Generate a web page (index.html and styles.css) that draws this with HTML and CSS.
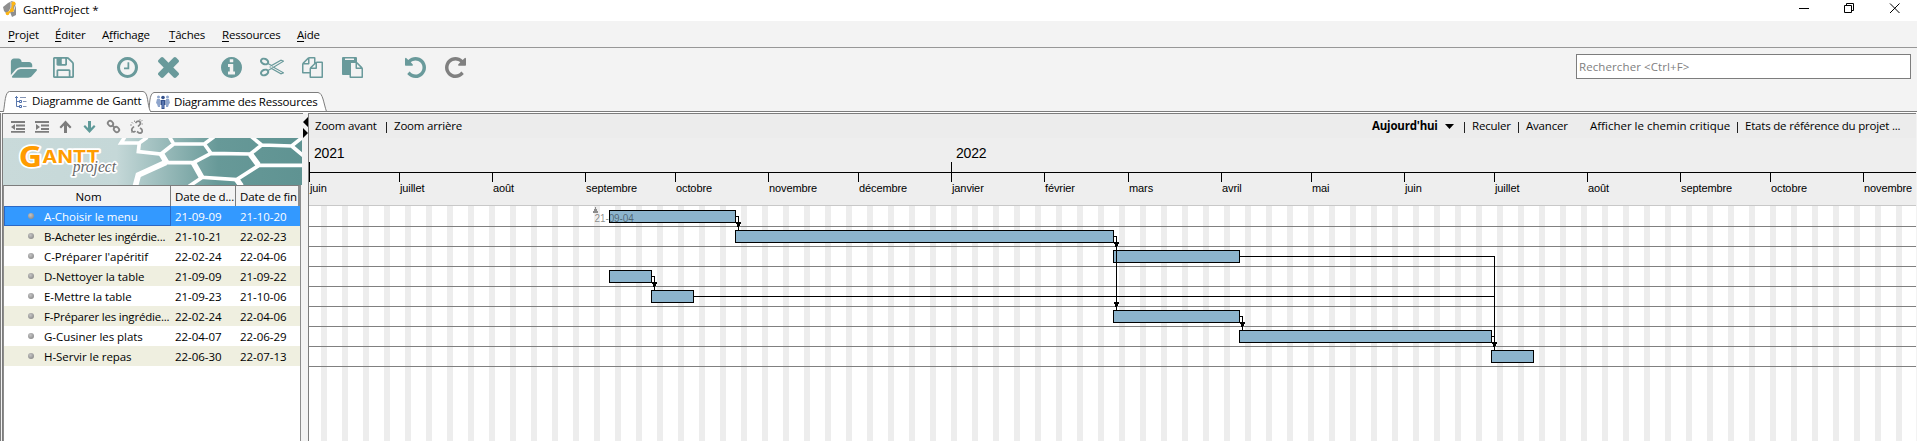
FILE: index.html
```html
<!DOCTYPE html>
<html lang="fr">
<head>
<meta charset="utf-8">
<title>GanttProject *</title>
<link rel="stylesheet" href="styles.css">
</head>
<body>
<header class="titlebar">
  <svg class="app-icon" width="14" height="16" viewBox="0 0 14 16"><path d="M0 6 5 2 9 0 13 3V14L9 16 7 11 4 13 1 10Z" fill="#8f8f8f"/><path d="M8 1v6l-3 5M13 3l-3 8" stroke="#fff" stroke-width=".8" fill="none"/><path d="M10 3 9 9 5 12" stroke="#fdb515" stroke-width="2" fill="none"/><circle cx="10.500" cy="2.500" r="2" fill="#fdb515"/><circle cx="9" cy="9" r="2" fill="#fdb515"/><circle cx="4.500" cy="12.500" r="1.800" fill="#fdb515"/></svg>
  <span class="app-name">GanttProject *</span>
  <svg class="window-buttons" width="110" height="21" viewBox="0 0 110 21" fill="none" stroke="#000"><path d="M4 8.500h10M49.500 5.500h7v7h-7zM51.500 5V3.500h7v7H57"/><path d="m95 3.500 9.500 9.500M104.500 3.500 95 13"/></svg>
</header>
<nav class="menubar">
  <span class="m1"><u>P</u>rojet</span><span class="m2"><u>É</u>diter</span><span class="m3">A<u>f</u>fichage</span><span class="m4"><u>T</u>âches</span><span class="m5"><u>R</u>essources</span><span><u>A</u>ide</span>
</nav>
<div class="toolbar">
  <svg class="t-open" viewBox="0 128 1943 1536" preserveAspectRatio="none"><path d="M1943 952q0 31-31 66l-336 396q-43 51-120.500 86.500t-143.500 35.500h-1088q-34 0-60.500-13t-26.500-43q0-31 31-66l336-396q43-51 120.500-86.500t143.500-35.500h1088q34 0 60.500 13t26.500 43zm-343-344v160h-832q-94 0-197 47.500t-164 119.500l-337 396-5 6q0-4-.5-12.500t-.5-12.500v-960q0-92 66-158t158-66h320q92 0 158 66t66 158v32h544q92 0 158 66t66 158z" transform="translate(0 110)"/></svg>
  <svg class="t-save" viewBox="128 128 1536 1536"><path d="M512 1536h768v-384h-768v384zm896 0h128v-896q0-14-10-38.500t-20-34.500l-281-281q-10-10-34-20t-39-10v416q0 40-28 68t-68 28h-576q-40 0-68-28t-28-68v-416h-128v1280h128v-416q0-40 28-68t68-28h832q40 0 68 28t28 68v416zm-384-928v-320q0-13-9.500-22.500t-22.500-9.500h-192q-13 0-22.500 9.500t-9.500 22.500v320q0 13 9.500 22.500t22.500 9.500h192q13 0 22.500-9.500t9.500-22.500zm640 32v928q0 40-28 68t-68 28h-1344q-40 0-68-28t-28-68v-1344q0-40 28-68t68-28h928q40 0 88 20t76 48l280 280q28 28 48 76t20 88z"/></svg>
  <svg class="t-clock" viewBox="128 128 1536 1536"><path d="M1024 544v448q0 14-9 23t-23 9h-320q-14 0-23-9t-9-23v-64q0-14 9-23t23-9h224v-352q0-14 9-23t23-9h64q14 0 23 9t9 23zm416 352q0-148-73-273t-198-198-273-73-273 73-198 198-73 273 73 273 198 198 273 73 273-73 198-198 73-273zm224 0q0 209-103 385.500t-279.500 279.500-385.500 103-385.500-103-279.500-279.500-103-385.500 103-385.500 279.500-279.500 385.500-103 385.500 103 279.500 279.500 103 385.500z"/></svg>
  <svg class="t-delete" viewBox="302 366 1188 1188"><path d="M1490 1322q0 40-28 68l-136 136q-28 28-68 28t-68-28l-294-294-294 294q-28 28-68 28t-68-28l-136-136q-28-28-28-68t28-68l294-294-294-294q-28-28-28-68t28-68l136-136q28-28 68-28t68 28l294 294 294-294q28-28 68-28t68 28l136 136q28 28 28 68t-28 68l-294 294 294 294q28 28 28 68z"/></svg>
  <svg class="t-info" viewBox="128 128 1536 1536"><path d="M1152 1376v-160q0-14-9-23t-23-9h-96v-512q0-14-9-23t-23-9h-320q-14 0-23 9t-9 23v160q0 14 9 23t23 9h96v320h-96q-14 0-23 9t-9 23v160q0 14 9 23t23 9h448q14 0 23-9t9-23zm-128-896v-160q0-14-9-23t-23-9h-192q-14 0-23 9t-9 23v160q0 14 9 23t23 9h192q14 0 23-9t9-23zm640 416q0 209-103 385.500t-279.500 279.500-385.500 103-385.500-103-279.500-279.500-103-385.500 103-385.500 279.500-279.500 385.500-103 385.500 103 279.500 279.500 103 385.500z"/></svg>
  <svg class="t-cut" viewBox="0 0 24 20"><g fill="none" stroke="#699a9b"><ellipse cx="4.600" cy="4.500" rx="3.700" ry="2.700" transform="rotate(22 4.600 4.500)" stroke-width="2"/><ellipse cx="4.600" cy="15.500" rx="3.700" ry="2.700" transform="rotate(-22 4.600 15.500)" stroke-width="2"/><path d="M8 6.500 11.500 8.500 21 3.200 23.500 4.200 13.500 10.200 23.500 15.800 21 16.800 11.500 11.500 8 13.500M9.500 10h1.500" stroke-width="1.100"/><circle cx="12.600" cy="10.200" r=".6" stroke-width=".7"/></g></svg>
  <svg class="t-copy" viewBox="0 0 1792 1792"><path d="M1696 384q40 0 68 28t28 68v1216q0 40-28 68t-68 28h-960q-40 0-68-28t-28-68v-288h-544q-40 0-68-28t-28-68v-672q0-40 20-88t48-76l408-408q28-28 76-48t88-20h416q40 0 68 28t28 68v328q68-40 128-40h416zm-544 213l-299 299h299v-299zm-640-384l-299 299h299v-299zm196 647l316-316v-416h-384v416q0 40-28 68t-68 28h-416v640h512v-256q0-40 20-88t48-76zm956 804v-1152h-384v416q0 40-28 68t-68 28h-416v640h896z"/></svg>
  <svg class="t-paste" viewBox="0 0 1792 1792"><path d="M768 1664h896v-640h-416q-40 0-68-28t-28-68v-416h-384v1152zm256-1440v-64q0-13-9.500-22.500t-22.500-9.500h-704q-13 0-22.500 9.500t-9.500 22.500v64q0 13 9.500 22.500t22.500 9.500h704q13 0 22.500-9.500t9.500-22.500zm256 672h299l-299-299v299zm512 128v672q0 40-28 68t-68 28h-960q-40 0-68-28t-28-68v-160h-544q-40 0-68-28t-28-68v-1344q0-40 28-68t68-28h1088q40 0 68 28t28 68v328q21 13 36 28l408 408q28 28 48 76t20 88z"/></svg>
  <svg class="t-undo" viewBox="128 128 1536 1536"><path id="undo" d="M1664 896q0 156-61 298t-164 245-245 164-298 61q-172 0-327-72.500t-264-204.500q-7-10-6.500-22.500t8.500-20.500l137-138q10-9 25-9 16 2 23 12 73 95 179 147t225 52q104 0 198.500-40.500t163.500-109.500 109.500-163.500 40.500-198.500-40.500-198.500-109.500-163.500-163.500-109.500-198.500-40.500q-98 0-188 35.500t-160 101.500l137 138q31 30 14 69-17 40-59 40h-448q-26 0-45-19t-19-45v-448q0-42 40-59 39-17 69 14l130 129q107-101 244.500-156.500t284.500-55.500q156 0 298 61t245 164 164 245 61 298z"/></svg>
  <svg class="t-redo" viewBox="128 128 1536 1536"><use href="#undo" transform="translate(1792 0) scale(-1 1)"/></svg>
  <div class="search">Rechercher &lt;Ctrl+F&gt;</div>
</div>
<div class="tabs">
  <svg class="tab-shapes" width="340" height="23" viewBox="0 0 340 23"><path d="M148.500 20.500C150 14 149 2.500 154 1.500H318C323 2 323.500 12 326.500 20.500" fill="#fff" stroke="#7d7d7d"/><path d="M3.500 22C4 14 5 1 9.500.5H143C148.500 1 147.500 14 150.500 21.500V22H3Z" fill="#fff"/><path d="M0 20.500H3.500C5 12 5 1 9.500.5H143C148.500 1 147 14 150.500 20.500H340" fill="none" stroke="#7d7d7d"/></svg>
  <svg class="tab-icon i1" width="12" height="12" viewBox="0 0 12 12" fill="none"><path d="M1.500 0v10.500H4M1.500 5.500H4M0 1.500h3" stroke="#5a78ad"/><path d="M4.500 4.500h2v2h-2zM4.500 9.500h2v2h-2z" stroke="#4a6cab"/><path d="M5 1.500h6M8 5.500h3.500M8 10.500h3.500" stroke="#8494b4"/></svg>
  <span class="tab-a">Diagramme de Gantt</span>
  <svg class="tab-icon i2" width="14" height="14" viewBox="0 0 14 14"><g fill="#8ea5cc"><circle cx="2.500" cy="2" r="1.500"/><circle cx="11.500" cy="2" r="1.500"/><path d="M1 4h3v8H2L1 9 0 8ZM13 4h-3v8h2l1-3 1-1Z"/></g><g fill="#34518c"><circle cx="7" cy="2.500" r="1.800"/><path d="M4.500 5h5v5h-1v4h-3v-4h-1Z"/></g><path d="M7 6v7" stroke="#7a98cf"/></svg>
  <span class="tab-b">Diagramme des Ressources</span>
</div>
<main class="workspace">
  <section class="tasks">
    <div class="mini">
      <svg width="140" height="24" viewBox="0 0 140 24"><g fill="#7d7d7d"><path d="M8 7h14v2H8zM13 10.500h9v2h-9zM13 14h9v2h-9zM8 17h14v1.800H8zM12 10v6L8 13zM32 7h14v2H32zM38 10.500h8v2h-8zM38 14h8v2h-8zM32 17h14v1.800H32zM33 10v6l4-3z"/><path d="m62.500 6.500 6 6.500-1.500 1.500-3-3V19h-3v-7.500l-3 3-1.500-1.500z"/></g><path d="m86.500 19 6-6.500L91 11l-3 3V7h-3v7l-3-3-1.500 1.500z" fill="#5f9a99"/><g fill="none" stroke="#858585" stroke-width="1.800"><rect x="-2.800" y="-2.300" width="5.600" height="4.600" rx="2.200" transform="translate(107.500 9.500) rotate(45)"/><rect x="-2.800" y="-2.300" width="5.600" height="4.600" rx="2.200" transform="translate(113.500 15.500) rotate(45)"/><path d="m109 11 3 3"/></g><g fill="none" stroke="#858585"><path d="m132.500 9 1.500-1.500q2-1 3 .5 1 1.500-.5 3L135 12.500M134 17.500l2 1.500q2 .5 3-1 .5-1.500-.5-3L137 14M131 12.500l-1.500 1.500q-1.500 2 0 3.500 1.500 1 3-.5" stroke-width="1.700"/><path d="m139.500 6-1.500 1.500M140 10h-1.500M137 5v1.500M127 11h2M128.500 8l1.500 1.500M131.500 6.500v1.500M128 18.500l1.500-1" stroke-width=".8"/></g></svg>
    </div>
    <svg class="banner" width="299" height="47" viewBox="9 84 897 141" preserveAspectRatio="none">
      <defs><linearGradient id="teal"><stop offset="0" stop-color="#c9dada"/><stop offset=".38" stop-color="#c5d8d8"/><stop offset=".72" stop-color="#679998"/><stop offset="1" stop-color="#5f9392"/></linearGradient></defs>
      <path d="M9 84h897v141H9z" fill="url(#teal)"/>
      <g transform="translate(330 60)" fill="none" stroke="#fff" stroke-width="11"><path d="m45 20-12 19H88L112 22M88 38l-3 27 68 7 38-30L178 20M191 42h92L312 20M283 42l20 28-53 28h-82L153 70M303 70l118 2 34-27L424 20M455 45l90 3L580 20M545 48l35 29M421 72l26 34H580M447 106l-67 43-105-7-25-44M275 143l-38 26M380 148l14 22"/><path d="m168 97-83 38-9 34" stroke-width="17"/><path d="m153 70 17 28M250 98l25 44M421 72l24 33M380 148l14 20" stroke-width="17"/></g>
      <g class="logo"><text x="56" y="170" class="logo-g" textLength="70" lengthAdjust="spacingAndGlyphs">G</text><text x="127" y="158" class="logo-rest" textLength="172" lengthAdjust="spacingAndGlyphs">ANTT</text><text x="218" y="187" class="logo-project" textLength="130" lengthAdjust="spacingAndGlyphs">project</text></g>
    </svg>
    <div class="table">
      <div class="row head"><span>Nom</span><span>Date de d...</span><span>Date de fin</span></div>
      <div class="row sel"><span><i></i>A-Choisir le menu</span><span>21-09-09</span><span>21-10-20</span></div>
      <div class="row alt"><span><i></i>B-Acheter les ingérdie...</span><span>21-10-21</span><span>22-02-23</span></div>
      <div class="row"><span><i></i>C-Préparer l'apéritif</span><span>22-02-24</span><span>22-04-06</span></div>
      <div class="row alt"><span><i></i>D-Nettoyer la table</span><span>21-09-09</span><span>21-09-22</span></div>
      <div class="row"><span><i></i>E-Mettre la table</span><span>21-09-23</span><span>21-10-06</span></div>
      <div class="row alt"><span><i></i>F-Préparer les ingrédie...</span><span>22-02-24</span><span>22-04-06</span></div>
      <div class="row"><span><i></i>G-Cusiner les plats</span><span>22-04-07</span><span>22-06-29</span></div>
      <div class="row alt"><span><i></i>H-Servir le repas</span><span>22-06-30</span><span>22-07-13</span></div>
    </div>
  </section>
  <div class="splitter"><svg width="6" height="26" viewBox="0 0 6 26"><path d="M6 3v10L1 8zM1 14v10l5-5z"/></svg></div>
  <section class="chart">
    <div class="chart-actions">
      <span class="c1">Zoom avant</span><b class="sep s1"></b><span class="c2">Zoom arrière</span>
      <strong class="c3">Aujourd'hui</strong><svg class="drop" width="9" height="5" viewBox="0 0 9 5"><path d="M0 0h9L4.500 5z"/></svg><b class="sep s2"></b><span class="c4">Reculer</span><b class="sep s3"></b><span class="c5">Avancer</span><span class="c6">Afficher le chemin critique</span><b class="sep s4"></b><span class="c7">Etats de référence du projet ...</span>
    </div>
    <div class="years"><span style="width:642px">2021</span><span>2022</span></div>
    <div class="months"><span style="width:90px">juin</span><span style="width:93px">juillet</span><span style="width:93px">août</span><span style="width:90px">septembre</span><span style="width:93px">octobre</span><span style="width:90px">novembre</span><span style="width:93px">décembre</span><span style="width:93px">janvier</span><span style="width:84px">février</span><span style="width:93px">mars</span><span style="width:90px">avril</span><span style="width:93px">mai</span><span style="width:90px">juin</span><span style="width:93px">juillet</span><span style="width:93px">août</span><span style="width:90px">septembre</span><span style="width:93px">octobre</span><span style="width:53px">novembre</span></div>
    <svg class="plot" width="1607" height="235" viewBox="309 206 1607 235" shape-rendering="crispEdges">
      <defs>
        <pattern id="weekends" x="321" y="206" width="21" height="20" patternUnits="userSpaceOnUse"><path d="M0 0h6v20H0z" fill="#ededed"/></pattern>
        <path id="tip" d="M-2 0h5v2H2v2H1v2H0V5h-1V2h-1z"/>
      </defs>
      <path d="M309 206h1607v235H309z" fill="url(#weekends)"/>
      <path d="M309 226.500h1607M309 246.500h1607M309 266.500h1607M309 286.500h1607M309 306.500h1607M309 326.500h1607M309 346.500h1607M309 366.500h1607" stroke="#808080"/>
      <g fill="#8cb4cd" stroke="#000">
        <path d="M609.500 210.500h126v12h-126z"/>
        <path d="M735.500 230.500h378v12h-378z"/>
        <path d="M1113.500 250.500h126v12h-126z"/>
        <path d="M609.500 270.500h42v12h-42z"/>
        <path d="M651.500 290.500h42v12h-42z"/>
        <path d="M1113.500 310.500h126v12h-126z"/>
        <path d="M1239.500 330.500h252v12h-252z"/>
        <path d="M1491.500 350.500h42v12h-42z"/>
      </g>
      <path d="M736 216.500h2.500V230M1114 236.500h2.500V310M652 276.500h2.500V290M694 296.500h800M1240 256.500h254.500V350M1240 316.500h2.500V330M1492 336.500h2" fill="none" stroke="#000"/>
      <use href="#tip" x="738" y="222"/><use href="#tip" x="1116" y="242"/><use href="#tip" x="654" y="282"/><use href="#tip" x="1116" y="302"/><use href="#tip" x="1242" y="322"/><use href="#tip" x="1494" y="342"/>
      <path d="M595 207h1v2h1v2h1v2h-5v-2h1v-2h1z" fill="#8c8c8c"/>
      <text x="594.500" y="222" class="mark">21-09-04</text>
    </svg>
  </section>
</main>
</body>
</html>
```
FILE: styles.css
```css
* { box-sizing: border-box; }
body {
  margin: 0;
  width: 1917px;
  height: 441px;
  overflow: hidden;
  display: flex;
  flex-direction: column;
  background: #f3f3f3;
  color: #000;
  font: 11.5px/16px "Open Sans", "Noto Sans", sans-serif;
  letter-spacing: -0.2px;
  white-space: nowrap;
}
svg { display: block; flex: none; }
.titlebar { display: flex; height: 21px; background: #fff; flex: none; }
.app-icon { margin: 1px 0 0 3px; }
.app-name { margin: 2px auto 0 6px; letter-spacing: -0.1px; }
.window-buttons { margin-right: 12px; }

.menubar {
  display: flex;
  flex: none;
  height: 27px;
  padding: 6px 0 0 8px;
  border-bottom: 1px solid #979797;
}
.menubar u { text-underline-offset: 2px; text-decoration-skip-ink: none; }
.m1 { width: 47px; }
.m2 { width: 47px; }
.m3 { width: 67px; }
.m4 { width: 53px; }
.m5 { width: 75px; }

.toolbar { display: flex; flex: none; height: 43px; padding: 9px 6px 0 10px; fill: #699a9b; }
.toolbar svg { width: 21px; height: 21px; }
.toolbar .t-open { width: 27px; }
.t-save { margin-left: 16px; }
.t-clock { margin-left: 43px; }
.t-delete { margin-left: 20px; }
.t-info { margin-left: 42px; }
.toolbar .t-cut { margin-left: 18px; width: 24px; height: 20px; }
.t-copy { margin-left: 18px; }
.t-paste { margin-left: 19px; }
.t-undo { margin-left: 42px; }
.t-redo { margin-left: 19px; fill: #808080; }
.search {
  width: 335px;
  height: 25px;
  margin: -3px 0 0 auto;
  padding: 4px 2px;
  border: 1px solid #7d7d7d;
  background: #fff;
  color: #808080;
  letter-spacing: 0.1px;
}

.tabs {
  position: relative;
  display: flex;
  flex: none;
  height: 22px;
  background: linear-gradient(#7d7d7d, #7d7d7d) 0 20px / 100% 1px no-repeat,
              linear-gradient(#fff, #fff) 0 21px / 100% 1px no-repeat;
}
.tab-shapes { position: absolute; left: 0; top: 0; }
.tabs span, .tab-icon { position: relative; }
.i1 { margin: 5px 5px 0 15px; }
.tab-a { margin-top: 2px; width: 124px; letter-spacing: -0.15px; }
.i2 { margin: 4px 4px 0 0; }
.tab-b { margin-top: 3px; }

.workspace { display: flex; flex: 1; min-height: 0; border-left: 1px solid #7d7d7d; }
.tasks {
  display: flex;
  flex-direction: column;
  width: 301px;
  margin-left: 1px;
  border-left: 1px solid #7d7d7d;
  border-top: 1px solid #7d7d7d;
}
.mini { height: 24px; flex: none; }
.banner { width: 299px; }
.logo { fill: #ff9c00; stroke: #fff; stroke-width: 10px; paint-order: stroke; stroke-linejoin: round; letter-spacing: 0; }
.logo-g { font: bold 86px "Open Sans", sans-serif; }
.logo-rest { font: bold 52px Inter, "Open Sans", sans-serif; }
.logo-project { font: italic 48px "Liberation Serif", serif; fill: #666; }

.table {
  flex: 1;
  width: 298px;
  border-left: 1px solid #8c8c8c;
  border-right: 1px solid #8c8c8c;
  background: #fff;
  letter-spacing: -0.05px;
}
.row { display: grid; grid-template-columns: 167px 65px 1fr; height: 20px; line-height: 22px; }
.row span { overflow: hidden; padding-left: 4px; height: 20px; }
.row span:first-child { display: flex; padding-left: 24px; }
.row:nth-child(3) span:first-child, .row:nth-child(7) span:first-child { letter-spacing: -0.2px; }
.row i {
  width: 6px;
  height: 6px;
  margin: 7px 10px 0 0;
  border-radius: 3px;
  background: radial-gradient(circle at 40% 35%, #c4c4c4, #7c7c7c);
}
.alt { background: #efefe0; }
.sel { background: #3399ff; color: #fff; }
.sel span:first-child { border: 1px solid #2c68c4; padding-left: 23px; line-height: 20px; }
.sel i { margin-top: 6px; }
.head { height: 21px; line-height: 22px; background: #f3f3f3; border-top: 1px solid #7d7d7d; border-right: 2px solid #8c8c8c; letter-spacing: -0.15px; }
.head span { border-right: 1px solid #7d7d7d; }
.head span:first-child { padding: 0 0 0 3px; justify-content: center; }
.head span:last-child { border: 0; }

.splitter { width: 5px; flex: none; }
.splitter svg { position: relative; left: -1px; margin-top: 1px; }
.chart {
  flex: none;
  width: 1608px;
  border-left: 1px solid #7d7d7d;
  border-top: 1px solid #7d7d7d;
  background: #fff;
}
.chart-actions { display: flex; align-items: flex-start; height: 24px; padding: 4px 0 0 6px; background: #ececec; }
.sep { width: 1px; height: 11px; margin-top: 4px; background: #222; }
.c1 { width: 71px; }
.s1 { margin-right: 7px; }
.c2 { width: 978px; }
.c3 { width: 73px; }
.drop { margin: 6px 10px 0 0; }
.s2, .s3, .s4 { margin-right: 7px; }
.c4 { width: 46px; }
.c5 { width: 64px; }
.c6 { width: 147px; letter-spacing: 0; }

.years {
  display: flex;
  height: 34px;
  background: #eee;
  font: 14px/16px "Liberation Sans", sans-serif;
  letter-spacing: -0.2px;
}
.years span {
  padding: 7px 0 0 5px;
  background: linear-gradient(#000, #000) 0 24px / 1px 10px no-repeat;
  flex: none;
}
.months {
  display: flex;
  height: 34px;
  background: #eee;
  border-top: 1px solid #000;
  border-bottom: 1px solid #c8c8c8;
  font: 11px/12px "Liberation Sans", sans-serif;
  letter-spacing: -0.1px;
}
.months span {
  flex: none;
  padding: 9px 0 0 1px;
  background: linear-gradient(#000, #000) 0 0 / 1px 9px no-repeat;
}
.mark { font: 10px "Liberation Sans", sans-serif; fill: #000; fill-opacity: .45; letter-spacing: -0.1px; }
```
